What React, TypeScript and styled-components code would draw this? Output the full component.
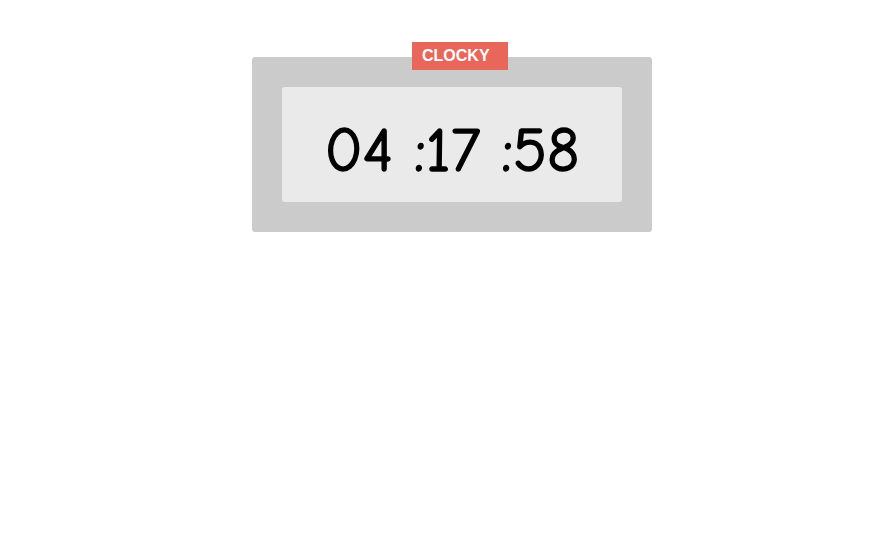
import React from "react";
import styled, { createGlobalStyle } from "styled-components";

const Global = createGlobalStyle`
  html, body { margin: 0; padding: 0; background: #ffffff; }
  body { font-family: "Liberation Sans", Arial, sans-serif; }
`;

const Page = styled.div`
  padding: 57px 0 0 252px;
`;

const Clock = styled.div`
  position: relative;
  width: 400px;
  height: 175px;
  box-sizing: border-box;
  padding: 30px;
  background: #cbcbcb;
  border-radius: 3px;
`;

const Label = styled.div`
  position: absolute;
  top: -15px;
  left: 160px;
  width: 96px;
  height: 28px;
  box-sizing: border-box;
  padding-left: 10px;
  background: #e8665a;
  color: #ffffff;
  font-family: "Liberation Sans", Arial, sans-serif;
  font-weight: bold;
  font-size: 16px;
  line-height: 28px;
`;

const Face = styled.div`
  height: 115px;
  background: #eaeaea;
  border-radius: 3px;
  display: flex;
  align-items: center;
  justify-content: center;
  padding-top: 12px;
  box-sizing: border-box;
`;

const Time = styled.div`
  font-family: "Comic Sans MS", "Comic Neue", Lato, sans-serif;
  font-weight: normal;
  font-size: 63px;
  color: #000000;
  -webkit-text-stroke: 1.4px #000000;
  white-space: pre;
  line-height: 1;
`;

export default function App() {
  return (
    <>
      <Global />
      <Page>
        <Clock>
          <Label>CLOCKY</Label>
          <Face>
            <Time>04 :17 :58</Time>
          </Face>
        </Clock>
      </Page>
    </>
  );
}
